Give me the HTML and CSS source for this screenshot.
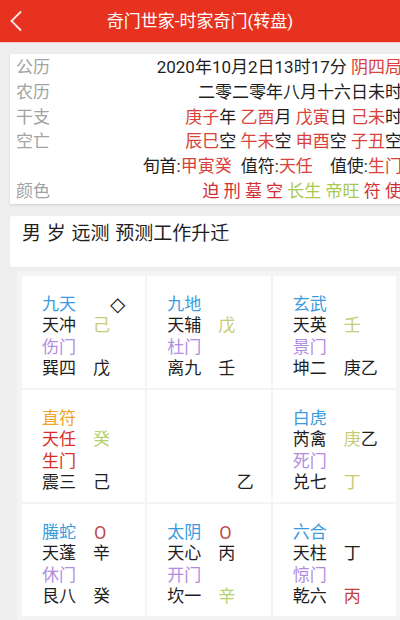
FILE: index.html
```html
<!DOCTYPE html>
<html lang="zh-CN">
<head>
<meta charset="utf-8">
<title>奇门世家-时家奇门(转盘)</title>
<link rel="stylesheet" href="styles.css">
</head>
<body>
<header class="topbar">
  <svg class="back" width="14" height="22" viewBox="0 0 14 22"><polyline points="12,1.5 2.5,11 12,20.5" fill="none" stroke="#fff" stroke-width="1.8" stroke-opacity="0.9"/></svg>
  <div class="title">奇门世家-时家奇门(转盘)</div>
</header>

<section class="info">
  <div class="row"><span class="lab">公历</span><span class="val">2020年10月2日13时17分 <span class="r">阴四局</span></span></div>
  <div class="row"><span class="lab">农历</span><span class="val">二零二零年八月十六日未时</span></div>
  <div class="row"><span class="lab">干支</span><span class="val"><span class="r">庚子</span>年 <span class="r">乙酉</span>月 <span class="r">戊寅</span>日 <span class="r">己未</span>时</span></div>
  <div class="row"><span class="lab">空亡</span><span class="val"><span class="r">辰巳</span>空 <span class="r">午未</span>空 <span class="r">申酉</span>空 <span class="r">子丑</span>空</span></div>
  <div class="row"><span class="lab"></span><span class="val">旬首:<span class="r">甲寅癸</span><span class="g1">值符:<span class="r">天任</span></span><span class="g2">值使:<span class="r">生门</span></span></span></div>
  <div class="row"><span class="lab">颜色</span><span class="val"><span class="dr">迫 刑 墓 空</span> <span class="lg">长生 帝旺</span> <span class="dr">符 使</span></span></div>
</section>

<section class="ask">男 岁 远测 预测工作升迁</section>

<section class="pan">
  <div class="cell">
    <div class="ln"><span class="c1 blue">九天</span><span class="c2 dia">◇</span></div>
    <div class="ln"><span class="c1">天冲</span><span class="c2 kh">己</span></div>
    <div class="ln"><span class="c1 pur">伤门</span></div>
    <div class="ln"><span class="c1">巽四</span><span class="c2">戊</span></div>
  </div>
  <div class="cell">
    <div class="ln"><span class="c1 blue">九地</span></div>
    <div class="ln"><span class="c1">天辅</span><span class="c2 kh">戊</span></div>
    <div class="ln"><span class="c1 pur">杜门</span></div>
    <div class="ln"><span class="c1">离九</span><span class="c2">壬</span></div>
  </div>
  <div class="cell">
    <div class="ln"><span class="c1 blue">玄武</span></div>
    <div class="ln"><span class="c1">天英</span><span class="c2 kh">壬</span></div>
    <div class="ln"><span class="c1 pur">景门</span></div>
    <div class="ln"><span class="c1">坤二</span><span class="c2">庚乙</span></div>
  </div>

  <div class="cell">
    <div class="ln"><span class="c1 org">直符</span></div>
    <div class="ln"><span class="c1 red">天任</span><span class="c2 lime">癸</span></div>
    <div class="ln"><span class="c1 red">生门</span></div>
    <div class="ln"><span class="c1">震三</span><span class="c2">己</span></div>
  </div>
  <div class="cell center">
    <div class="ln"></div>
    <div class="ln"></div>
    <div class="ln"></div>
    <div class="ln end">乙</div>
  </div>
  <div class="cell">
    <div class="ln"><span class="c1 blue">白虎</span></div>
    <div class="ln"><span class="c1">芮禽</span><span class="c2"><span class="kh">庚</span>乙</span></div>
    <div class="ln"><span class="c1 pur">死门</span></div>
    <div class="ln"><span class="c1">兑七</span><span class="c2 kh">丁</span></div>
  </div>

  <div class="cell">
    <div class="ln"><span class="c1 blue">螣蛇</span><span class="c2 ring">O</span></div>
    <div class="ln"><span class="c1">天蓬</span><span class="c2">辛</span></div>
    <div class="ln"><span class="c1 pur">休门</span></div>
    <div class="ln"><span class="c1">艮八</span><span class="c2">癸</span></div>
  </div>
  <div class="cell">
    <div class="ln"><span class="c1 blue">太阴</span><span class="c2 ring">O</span></div>
    <div class="ln"><span class="c1">天心</span><span class="c2">丙</span></div>
    <div class="ln"><span class="c1 pur">开门</span></div>
    <div class="ln"><span class="c1">坎一</span><span class="c2 lime">辛</span></div>
  </div>
  <div class="cell">
    <div class="ln"><span class="c1 blue">六合</span></div>
    <div class="ln"><span class="c1">天柱</span><span class="c2">丁</span></div>
    <div class="ln"><span class="c1 pur">惊门</span></div>
    <div class="ln"><span class="c1">乾六</span><span class="c2 crim">丙</span></div>
  </div>
</section>
</body>
</html>
```
FILE: styles.css
```css
* { box-sizing: border-box; }
html, body { margin: 0; padding: 0; }
body {
  width: 400px;
  height: 620px;
  overflow: hidden;
  background: #eeeeee;
  font-family: Roboto, "Noto Sans CJK SC", sans-serif;
  color: #1e1e1e;
}

.topbar {
  height: 43px;
  background: #e6321f;
  border-bottom: 1px solid #f4c9c3;
  display: flex;
  align-items: center;
  justify-content: center;
  position: relative;
}
.back {
  position: absolute;
  left: 9px;
  top: 10px;
}
.title {
  color: #fff;
  font-size: 17px;
  line-height: 22px;
}

.info {
  margin: 11px 0 0 10px;
  width: 398px;
  background: #fff;
  padding: 1px 6px 0 6px;
  box-shadow: 0 1px 2px rgba(0,0,0,0.12);
  font-size: 17px;
}
.row {
  display: flex;
  height: 24.8px;
  line-height: 24.8px;
  white-space: nowrap;
}
.lab { color: #a3a3a3; }
.val { margin-left: auto; }
.r { color: #d8413c; }
.dr { color: #d22f34; }
.lg { color: #a9c94f; }
.g1 { margin-left: 9px; }
.g2 { margin-left: 17px; }

.ask {
  margin: 12px 0 0 10px;
  width: 398px;
  height: 51px;
  background: #fff;
  border-radius: 3px;
  padding: 5px 12px 0 12px;
  font-size: 19px;
  line-height: 26px;
  word-spacing: 1px;
  color: #1e1e1e;
}

.pan {
  margin: 4px 0 0 17px;
  width: 384px;
  background: #f4f4f4;
  padding: 5px;
  display: grid;
  grid-template-columns: repeat(3, 1fr);
  grid-template-rows: repeat(3, 112px);
  gap: 2px;
}
.cell {
  background: #fff;
  padding: 18px 0 0 20px;
  font-size: 17px;
}
.ln {
  display: flex;
  height: 21.5px;
  line-height: 21.5px;
  white-space: nowrap;
}
.c1 { width: 51px; flex: none; }
.c2 { flex: none; }
.center { padding-right: 17px; }
.center .ln.end { justify-content: flex-end; }

.blue { color: #3b9be0; }
.pur { color: #b18de0; }
.org { color: #f0a526; }
.red { color: #d92d2d; }
.kh { color: #c7cb74; }
.lime { color: #b5d26e; }
.crim { color: #c8413a; }
.ring { color: #c24a52; padding-left: 1px; font-size: 18px; }
.c2.dia {
  padding-left: 17px;
  color: #111111;
  font-family: "DejaVu Sans", sans-serif;
  font-size: 20px;
}
```
